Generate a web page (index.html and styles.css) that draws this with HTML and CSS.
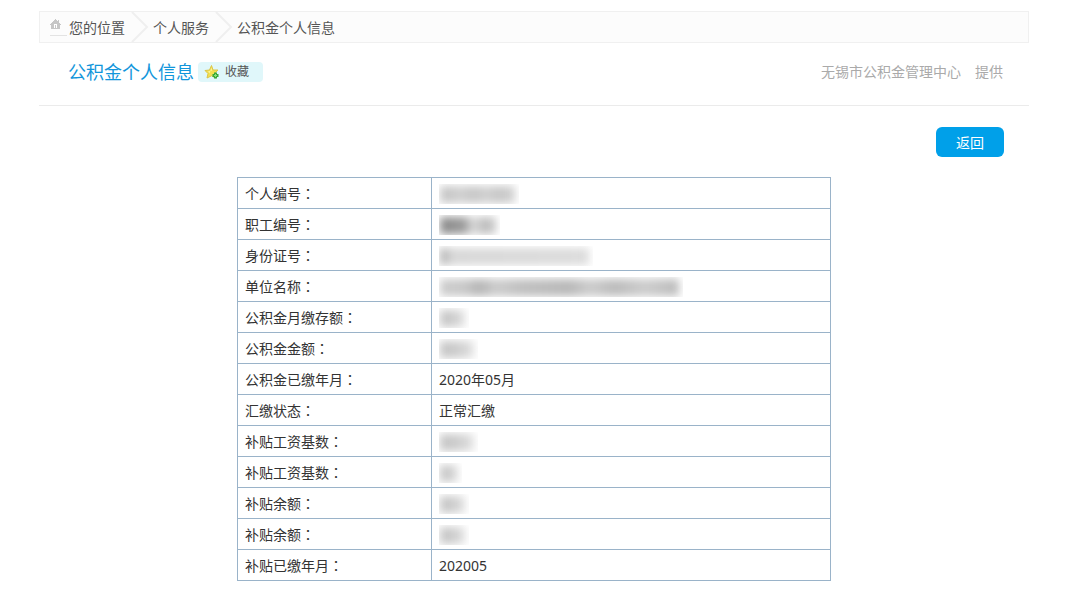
FILE: index.html
```
<!DOCTYPE html>
<html lang="zh-CN">

<head>
    <meta charset="UTF-8">
    <meta name="viewport" content="width=device-width, initial-scale=1.0">
    <title>公积金个人信息</title>
    <link rel="stylesheet" href="styles.css">
</head>

<body>
    <div class="container">
        <nav class="crumbs">
            <a href="#" class="home">
                <svg class="home-icon" width="17" height="18" viewBox="0 0 17 18" shape-rendering="crispEdges">
                    <path d="M5 0h1v1h1v1h1v1h1v1h1v1h1v1h-1v4H1V6H0V5h1V4h1V3h1V2h1V1h1z" fill="#c6c6c6"/>
                    <path d="M8 1h1v2H8z" fill="#c6c6c6"/>
                    <path d="M4 5h3v4H4z" fill="#fff"/>
                    <path d="M5 6h1v3H5z" fill="#c6c6c6"/>
                    <path d="M0 16h17v1H0z" fill="#e3e3e3"/>
                </svg>
                <span>您的位置</span>
            </a>
            <svg class="arrow" width="18" height="30" viewBox="0 0 18 30">
                <path d="M1 0L16 15L1 30" fill="none" stroke="#efefef" stroke-width="2"/>
            </svg>
            <a href="#">个人服务</a>
            <svg class="arrow" width="18" height="30" viewBox="0 0 18 30">
                <path d="M1 0L16 15L1 30" fill="none" stroke="#efefef" stroke-width="2"/>
            </svg>
            <a href="#">公积金个人信息</a>
        </nav>

        <div class="header">
            <h1>公积金个人信息</h1>
            <button type="button" class="favorite">
                <svg width="16" height="16" viewBox="0 0 16 16">
                    <path d="M7.500 1.500L9 6L14 6L10.500 9.500L11.500 14L7.500 11.800L3 14L4 9.500L1 6.500L5.500 6Z" fill="#f3e04f" stroke="#dcc548"/>
                    <path d="M7.500 3.500L8 6.500L4 7.500L5.500 9L5 11Z" fill="#fdf6a8"/>
                    <path d="M10 8.500h3v1.500h1.500v3H13v1.500h-3V13H8.500v-3H10z" fill="#38a838"/>
                    <path d="M11 10h1v1h1v1h-1v1h-1v-1h-1v-1h1z" fill="#8fe07c"/>
                </svg>
                <span>收藏</span>
            </button>
            <div class="provider">
                <span>无锡市公积金管理中心</span>
                <span>提供</span>
            </div>
        </div>

        <div class="toolbar">
            <button type="button" class="back">返回</button>
        </div>

        <table class="info">
            <tr>
                <th scope="row">个人编号<span class="colon" lang="zh-TW">：</span></th>
                <td><div class="mask mask-id"><i></i></div></td>
            </tr>
            <tr>
                <th scope="row">职工编号<span class="colon" lang="zh-TW">：</span></th>
                <td><div class="mask mask-staff"><i></i></div></td>
            </tr>
            <tr>
                <th scope="row">身份证号<span class="colon" lang="zh-TW">：</span></th>
                <td><div class="mask mask-card"><i></i></div></td>
            </tr>
            <tr>
                <th scope="row">单位名称<span class="colon" lang="zh-TW">：</span></th>
                <td><div class="mask mask-company"><i></i></div></td>
            </tr>
            <tr>
                <th scope="row">公积金月缴存额<span class="colon" lang="zh-TW">：</span></th>
                <td><div class="mask"><i></i></div></td>
            </tr>
            <tr>
                <th scope="row">公积金金额<span class="colon" lang="zh-TW">：</span></th>
                <td><div class="mask mask-amount"><i></i></div></td>
            </tr>
            <tr>
                <th scope="row">公积金已缴年月<span class="colon" lang="zh-TW">：</span></th>
                <td>2020年05月</td>
            </tr>
            <tr>
                <th scope="row">汇缴状态<span class="colon" lang="zh-TW">：</span></th>
                <td>正常汇缴</td>
            </tr>
            <tr>
                <th scope="row">补贴工资基数<span class="colon" lang="zh-TW">：</span></th>
                <td><div class="mask mask-amount"><i></i></div></td>
            </tr>
            <tr>
                <th scope="row">补贴工资基数<span class="colon" lang="zh-TW">：</span></th>
                <td><div class="mask mask-short"><i></i></div></td>
            </tr>
            <tr>
                <th scope="row">补贴余额<span class="colon" lang="zh-TW">：</span></th>
                <td><div class="mask"><i></i></div></td>
            </tr>
            <tr>
                <th scope="row">补贴余额<span class="colon" lang="zh-TW">：</span></th>
                <td><div class="mask"><i></i></div></td>
            </tr>
            <tr>
                <th scope="row">补贴已缴年月<span class="colon" lang="zh-TW">：</span></th>
                <td>202005</td>
            </tr>
        </table>
    </div>
</body>

</html>
```

FILE: styles.css
```
* {
    box-sizing: border-box;
}

body {
    margin: 0;
    background-color: #fff;
    color: #333;
    font-family: "Noto Sans", "Noto Sans CJK SC", sans-serif;
    font-size: 14px;
    line-height: 20px;
}

.container {
    margin: 11px 41px 29px 39px;
}

button {
    border: none;
    font-family: inherit;
    cursor: pointer;
}

.crumbs {
    display: flex;
    align-items: center;
    height: 32px;
    padding-left: 10px;
    background-color: #fcfcfc;
    border: 1px solid #f0f0f0;
}

.crumbs a {
    display: flex;
    align-items: center;
    padding-top: 1px;
    color: #555;
    text-decoration: none;
}

.home-icon {
    margin-right: 2px;
}

.arrow {
    margin: 0 4px 0 6px;
}

.header {
    display: flex;
    align-items: center;
    height: 63px;
    padding: 0 26px 4px 29px;
    border-bottom: 1px solid #ebebeb;
}

.header h1 {
    margin: 0;
    color: #1296db;
    font-size: 18px;
    font-weight: normal;
}

.favorite {
    display: flex;
    align-items: center;
    gap: 5px;
    height: 20px;
    margin-left: 4px;
    padding: 0 14px 0 6px;
    border-radius: 4px;
    background-color: #e0f7fa;
    color: #555;
    font-size: 12px;
    line-height: 18px;
}

.provider {
    display: flex;
    gap: 14px;
    margin-left: auto;
    color: #aaa;
}

.toolbar {
    display: flex;
    justify-content: flex-end;
    padding: 21px 25px 20px 0;
}

.back {
    width: 68px;
    height: 30px;
    border-radius: 6px;
    background-color: #00a0e9;
    color: #fff;
    font-size: 14px;
}

.info {
    width: 60%;
    margin: 0 auto;
    border-collapse: collapse;
    table-layout: fixed;
}

.info th,
.info td {
    height: 31px;
    padding: 2px 7px 0;
    border: 1px solid #9ab3c9;
    font-weight: normal;
    text-align: left;
}

.info th {
    width: 194px;
}

/* centered full-width colon */
.colon {
    font-family: "Noto Sans CJK TC", sans-serif;
    line-height: 1;
}

/* hidden personal values */
.mask {
    width: 30px;
    height: 20px;
    overflow: hidden;
}

.mask i {
    display: block;
    height: 17px;
    margin: 2px 4px 0 1px;
    background: linear-gradient(90deg, #c4c4c4, #ccc 50%, #e2e2e2);
    filter: blur(4px);
}

.mask-id {
    width: 80px;
}

.mask-id i {
    background: repeating-linear-gradient(90deg, #c8c8c8 0 12px, #d0d0d0 18px 26px);
}

.mask-staff {
    width: 61px;
}

.mask-staff i {
    background: linear-gradient(90deg, #8a8a8a, #999 24px, #ddd 33px, #bbb 44px, #ccc);
}

.mask-card {
    width: 154px;
}

.mask-card i {
    background: linear-gradient(90deg, #aaa, #d8d8d8 12px, #dcdcdc);
}

.mask-company {
    width: 244px;
}

.mask-company i {
    background: linear-gradient(90deg, #ccc, #c8c8c8 24px, #b4b4b4 40px, #ccc 56px, #c0c0c0 80px, #b8b8b8 130px, #ccc 150px, #bbb 175px, #ccc 205px, #bbb);
}

.mask-amount {
    width: 39px;
}

.mask-short {
    width: 23px;
}
```
